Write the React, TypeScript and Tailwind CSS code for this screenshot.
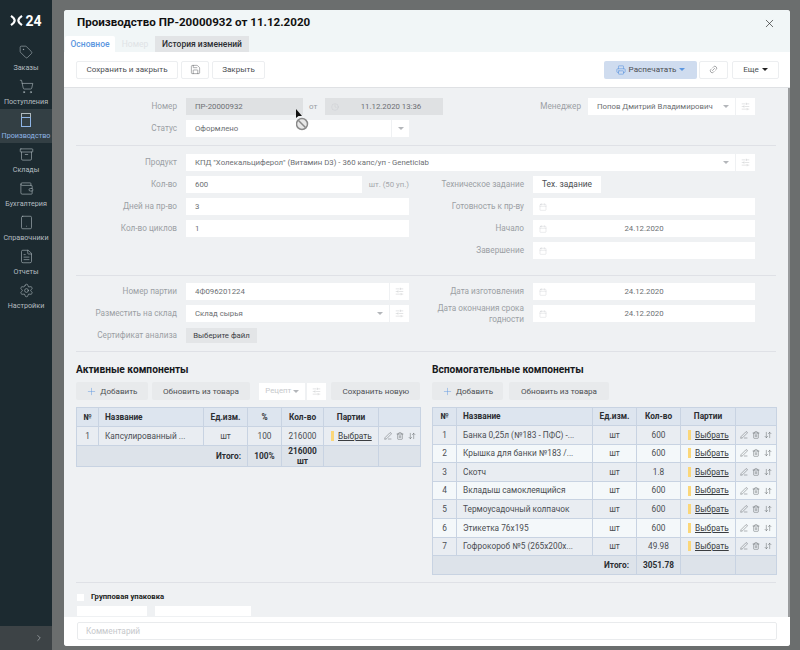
import React from "react";
import { Tag, ShoppingCart, Archive, Wallet, Tablet, FileText, Settings, ChevronRight, X, Plus, Save, Link2, Calendar, SlidersHorizontal, PenLine, Trash2, ArrowDownUp, Clock, Printer } from "lucide-react";

const font = { fontFamily: "Roboto, Inter, 'Noto Sans', sans-serif" };

function ProductionIcon() {
  return (
    <svg width="14" height="16" viewBox="0 0 14 16" fill="none" stroke="#aeb9bd" strokeWidth="1">
      <rect x="2.5" y="1.5" width="9" height="4" />
      <rect x="2.5" y="5.5" width="9" height="9" stroke="#8fb5e6" />
    </svg>
  );
}

const navItems: [string, React.ReactNode][] = [
  ["Заказы", <Tag size={14} strokeWidth={1} />],
  ["Поступления", <ShoppingCart size={15} strokeWidth={1} />],
  ["Производство", <ProductionIcon />],
  ["Склады", <Archive size={15} strokeWidth={1} />],
  ["Бухгалтерия", <Wallet size={15} strokeWidth={1} />],
  ["Справочники", <Tablet size={15} strokeWidth={1} />],
  ["Отчеты", <FileText size={15} strokeWidth={1} />],
  ["Настройки", <Settings size={15} strokeWidth={1} />],
];

function Sidebar() {
  return (
    <aside className="flex h-[650px] w-[52px] shrink-0 flex-col bg-[#1c2a30]">
      <div className="flex h-[41px] items-center justify-center gap-[2px]">
        <svg width="13" height="11" viewBox="0 0 14 12" fill="none" stroke="#ffffff" strokeWidth="2.4">
          <path d="M1 1 C4 3 5 5 5 6 C5 7 4 9 1 11" />
          <path d="M13 1 C10 3 9 5 9 6 C9 7 10 9 13 11" />
        </svg>
        <span className="text-[14px] font-bold leading-none text-white">24</span>
      </div>
      <nav className="flex flex-col">
        {navItems.map(([label, icon]) => {
          const active = label === "Производство";
          return (
            <div key={label} className={`flex h-[34px] flex-col items-center justify-center gap-[2px] ${active ? "bg-[#333f44] text-[#8fb5e6]" : "text-[#b5bdc0]"}`}>
              <span className="flex h-[18px] items-center justify-center text-[#aeb9bd]">{icon}</span>
              <span className="whitespace-nowrap text-[7.2px] leading-[10px]">{label}</span>
            </div>
          );
        })}
      </nav>
      <div className="mt-auto flex h-[24px] items-center justify-end bg-[#3d4346] pr-[8px] text-[#9aa0a3]">
        <ChevronRight size={10} />
      </div>
    </aside>
  );
}

function Btn({ children, className = "" }: { children: React.ReactNode; className?: string }) {
  return <div className={`flex h-[18px] items-center justify-center whitespace-nowrap rounded-[2px] text-[8.1px] text-[#4b4e52] ${className}`}>{children}</div>;
}

function Tune() {
  return (
    <div className="ml-[1px] flex h-[17px] w-[19px] shrink-0 items-center justify-center bg-white text-[#b3b6ba]">
      <SlidersHorizontal size={9} strokeWidth={1} />
    </div>
  );
}

function Caret({ dark = false }: { dark?: boolean }) {
  return <span className={`inline-block h-0 w-0 border-x-[3px] border-t-[3px] border-x-transparent ${dark ? "border-t-[#222]" : "border-t-[#b3b6ba]"}`} />;
}

function Label({ children, w }: { children: React.ReactNode; w: string }) {
  return <div className={`${w} shrink-0 pr-[9px] text-right text-[8.2px] leading-[11px] text-[#9b9fa4]`}>{children}</div>;
}

function Input({ value, w, select = false, grey = false }: { value: string; w: string; select?: boolean; grey?: boolean }) {
  return (
    <div className={`flex h-[17px] ${w} items-center pl-[9px] text-[7.8px] text-[#6c6f73] ${grey ? "bg-[#dfe1e3]" : "bg-white"}`}>
      <span className="flex-1 truncate">{value}</span>
      {select && (
        <span className="mr-[6px] flex items-center">
          <Caret />
        </span>
      )}
    </div>
  );
}

function DateInput({ value, w = "w-[222px]", grey = false, clock = false }: { value: string; w?: string; grey?: boolean; clock?: boolean }) {
  return (
    <div className={`flex h-[17px] ${w} items-center text-[7.8px] text-[#6c6f73] ${grey ? "bg-[#dfe1e3]" : "bg-white"}`}>
      <span className="flex w-[14px] justify-end text-[#c3c6ca]">{clock ? <Clock size={8} strokeWidth={1} /> : <Calendar size={8} strokeWidth={1} />}</span>
      <span className={`flex-1 text-center ${grey ? "" : "pr-[14px]"}`}>{value}</span>
    </div>
  );
}

function Row({ left, right }: { left: React.ReactNode; right?: React.ReactNode }) {
  return (
    <div className="flex h-[17px] items-center">
      <div className="flex w-[333px] shrink-0 items-center">{left}</div>
      {right && <div className="flex items-center">{right}</div>}
    </div>
  );
}

const L = "w-[110px]";
const R = "w-[124px]";

function Form() {
  return (
    <div className="flex flex-col">
      <div className="flex flex-col gap-[5px]">
        <div className="flex h-[17px] items-center">
          <Label w={L}>Номер</Label>
          <Input value="ПР-20000932" w="w-[117px]" grey />
          <span className="w-[22px] pl-[6px] text-[8px] text-[#9b9fa4]">от</span>
          <DateInput value="11.12.2020 13:36" w="w-[118px]" grey clock />
          <div className="w-[145px] pr-[7px] text-right text-[8.2px] text-[#9b9fa4]">Менеджер</div>
          <Input value="Попов Дмитрий Владимирович" w="w-[147px]" select />
          <Tune />
        </div>
        <Row left={<><Label w={L}>Статус</Label><Input value="Оформлено" w="w-[235px]" /><div className="ml-[1px] flex h-[17px] w-[19px] items-center justify-center bg-white"><Caret /></div></>} />
      </div>
      <div className="my-[8px] h-px bg-[#dfe1e6]" />
      <div className="flex flex-col gap-[5px]">
        <div className="flex h-[17px] items-center">
          <Label w={L}>Продукт</Label>
          <Input value='КПД "Холекальциферол" (Витамин D3) - 360 капс/уп - Geneticlab' w="w-[549px]" select />
          <Tune />
        </div>
        <Row
          left={<><Label w={L}>Кол-во</Label><Input value="600" w="w-[176px]" /><span className="ml-[7px] whitespace-nowrap text-[7.8px] text-[#a5a8ac]">шт. (50 уп.)</span></>}
          right={<><Label w={R}>Техническое задание</Label><div className="flex h-[17px] w-[68px] items-center justify-center bg-white text-[8.4px] text-[#4b4e52]">Тех. задание</div></>}
        />
        <Row
          left={<><Label w={L}>Дней на пр-во</Label><Input value="3" w="w-[223px]" /></>}
          right={<><Label w={R}>Готовность к пр-ву</Label><DateInput value="" /></>}
        />
        <Row
          left={<><Label w={L}>Кол-во циклов</Label><Input value="1" w="w-[223px]" /></>}
          right={<><Label w={R}>Начало</Label><DateInput value="24.12.2020" /></>}
        />
        <Row left={<div />} right={<><Label w={R}>Завершение</Label><DateInput value="" /></>} />
      </div>
      <div className="mb-[7px] mt-[16px] h-px bg-[#dfe1e6]" />
      <div className="flex flex-col gap-[5px]">
        <Row
          left={<><Label w={L}>Номер партии</Label><Input value="4Ф096201224" w="w-[203px]" /><Tune /></>}
          right={<><Label w={R}>Дата изготовления</Label><DateInput value="24.12.2020" /></>}
        />
        <Row
          left={<><Label w={L}>Разместить на склад</Label><Input value="Склад сырья" w="w-[203px]" select /><Tune /></>}
          right={<><Label w={R}>Дата окончания срока<br />годности</Label><DateInput value="24.12.2020" /></>}
        />
        <Row left={<><Label w={L}>Сертификат анализа</Label><div className="flex h-[15px] w-[71px] items-center justify-center bg-[#e3e5e7] text-[7.8px] text-[#3d4044]">Выберите файл</div></>} />
      </div>
      <div className="mt-[7px] h-px bg-[#dfe1e6]" />
    </div>
  );
}

const blue = "border border-[#c8d3e2]";

function Actions() {
  return (
    <div className="flex items-center justify-center gap-[4px] text-[#45484c]">
      <PenLine size={8} strokeWidth={1.2} />
      <Trash2 size={8} strokeWidth={1.2} />
      <ArrowDownUp size={8} strokeWidth={1.2} />
    </div>
  );
}

function Pick() {
  return (
    <div className="flex items-center gap-[4px] pl-[7px]">
      <span className="h-[10px] w-[3px] bg-[#fbd77a]" />
      <span className="text-[8.3px] text-[#3a3d41] underline">Выбрать</span>
    </div>
  );
}

function ActiveTable() {
  const h = `${blue} text-[8.3px] font-bold text-[#2b2e32] text-center`;
  const c = `${blue} text-[8.3px] text-[#4b4e52] text-center`;
  return (
    <table className="w-[344px] table-fixed border-collapse">
      <colgroup>
        <col className="w-[22px]" /><col className="w-[105px]" /><col className="w-[44px]" /><col className="w-[34px]" /><col className="w-[42px]" /><col className="w-[55px]" /><col className="w-[42px]" />
      </colgroup>
      <tbody>
        <tr className="h-[19px] bg-[#dde5ef]">
          <td className={h}>№</td><td className={`${h} !text-left pl-[6px]`}>Название</td><td className={h}>Ед.изм.</td><td className={h}>%</td><td className={h}>Кол-во</td><td className={h}>Партии</td><td className={h} />
        </tr>
        <tr className="h-[19px] bg-[#e9edf2]">
          <td className={c}>1</td><td className={`${c} !text-left truncate pl-[6px]`}>Капсулированный ...</td><td className={c}>шт</td><td className={c}>100</td><td className={c}>216000</td><td className={blue}><Pick /></td><td className={blue}><Actions /></td>
        </tr>
        <tr className="h-[21px] bg-[#dde3ea]">
          <td className={`${h} !text-right pr-[6px]`} colSpan={3}>Итого:</td><td className={h}>100%</td><td className={`${h} px-[4px] leading-[10px]`}>216000 шт</td><td className={blue} /><td className={blue} />
        </tr>
      </tbody>
    </table>
  );
}

const aux: [string, string][] = [
  ["Банка 0,25л (№183 - ПФС) -...", "600"],
  ["Крышка для банки №183 /...", "600"],
  ["Скотч", "1.8"],
  ["Вкладыш самоклеящийся", "600"],
  ["Термоусадочный колпачок", "600"],
  ["Этикетка 76х195", "600"],
  ["Гофрокороб №5 (265х200х...", "49.98"],
];

function AuxTable() {
  const h = `${blue} text-[8.3px] font-bold text-[#2b2e32] text-center`;
  const c = `${blue} text-[8.3px] text-[#4b4e52] text-center`;
  return (
    <table className="w-[344px] table-fixed border-collapse">
      <colgroup>
        <col className="w-[24px]" /><col className="w-[136px]" /><col className="w-[44px]" /><col className="w-[44px]" /><col className="w-[55px]" /><col className="w-[41px]" />
      </colgroup>
      <tbody>
        <tr className="h-[18px] bg-[#dde5ef]">
          <td className={h}>№</td><td className={`${h} !text-left pl-[6px]`}>Название</td><td className={h}>Ед.изм.</td><td className={h}>Кол-во</td><td className={h}>Партии</td><td className={h} />
        </tr>
        {aux.map(([n, q], i) => (
          <tr key={n} className={`h-[18.6px] ${i % 2 === 0 ? "bg-[#e9edf2]" : "bg-[#f4f8fa]"}`}>
            <td className={c}>{i + 1}</td><td className={`${c} !text-left truncate pl-[6px]`}>{n}</td><td className={c}>шт</td><td className={c}>{q}</td><td className={blue}><Pick /></td><td className={blue}><Actions /></td>
          </tr>
        ))}
        <tr className="h-[19px] bg-[#dde3ea]">
          <td className={`${h} !text-right pr-[7px]`} colSpan={3}>Итого:</td><td className={h}>3051.78</td><td className={blue} /><td className={blue} />
        </tr>
      </tbody>
    </table>
  );
}

function Components() {
  return (
    <div className="flex gap-[12px]">
      <section className="w-[344px]">
        <h2 className="mb-[6px] mt-[12px] text-[10.2px] font-bold leading-[12px] text-[#17191c]">Активные компоненты</h2>
        <div className="mb-[7px] flex h-[18px] items-center gap-[4px]">
          <Btn className="w-[73px] gap-[3px] bg-[#e8eaec]"><Plus size={11} strokeWidth={1} className="text-[#5b96e0]" />Добавить</Btn>
          <Btn className="w-[100px] bg-[#e8eaec]">Обновить из товара</Btn>
          <div className="ml-[5px] flex h-[17px] w-[47px] items-center justify-center gap-[2px] bg-white text-[7.8px] text-[#c6c8cb]">Рецепт <Caret /></div>
          <div className="-ml-[3px]"><Tune /></div>
          <Btn className="ml-[1px] w-[90px] bg-[#e8eaec]">Сохранить новую</Btn>
        </div>
        <ActiveTable />
      </section>
      <section className="w-[344px]">
        <h2 className="mb-[6px] mt-[12px] text-[10.2px] font-bold leading-[12px] text-[#17191c]">Вспомогательные компоненты</h2>
        <div className="mb-[7px] flex h-[18px] items-center gap-[6px]">
          <Btn className="w-[71px] gap-[3px] bg-[#e8eaec]"><Plus size={11} strokeWidth={1} className="text-[#5b96e0]" />Добавить</Btn>
          <Btn className="w-[100px] bg-[#e8eaec]">Обновить из товара</Btn>
        </div>
        <AuxTable />
      </section>
    </div>
  );
}

function Cursor() {
  return (
    <div className="absolute left-[232px] top-[99px]">
      <svg width="18" height="24" viewBox="0 0 18 24" fill="none">
        <path d="M0 0 L0 9 L2.5 7 L6 7 Z" fill="#111" />
        <circle cx="6" cy="15" r="5.5" fill="#e8e8e8" stroke="#8a8a8a" strokeWidth="1.5" />
        <path d="M2.5 11.5 L9.5 18.5" stroke="#8a8a8a" strokeWidth="1.5" />
      </svg>
    </div>
  );
}

function Modal() {
  return (
    <main className="relative flex h-[636px] w-[726px] flex-col overflow-hidden rounded-[3px] bg-[#eff1f3]">
      <header className="h-[42px] shrink-0 bg-[#f1f6f7]">
        <div className="flex h-[26px] items-center justify-between pl-[13px] pr-[14px]">
          <h1 className="text-[11.6px] font-bold leading-none text-[#111]">Производство ПР-20000932 от 11.12.2020</h1>
          <X size={13} strokeWidth={1.2} className="text-[#222]" />
        </div>
        <div className="flex h-[16px] pl-[1px]">
          <div className="flex w-[50px] items-center justify-center rounded-t-[2px] bg-white text-[8.5px] font-medium text-[#5b96e0]">Основное</div>
          <div className="flex w-[40px] items-center justify-center text-[8.5px] text-[#dfe3e6]">Номер</div>
          <div className="flex w-[94px] items-center justify-center bg-[#e2e4e6] text-[8.5px] font-medium text-[#2b2e32]">История изменений</div>
        </div>
      </header>
      <div className="flex h-[36px] shrink-0 items-center border-b border-[#dfe1e4] bg-white pl-[12px] pr-[11px]">
        <Btn className="w-[102px] border border-[#eceef0]">Сохранить и закрыть</Btn>
        <Btn className="ml-[3px] w-[28px] border border-[#eceef0]"><Save size={11} strokeWidth={1} /></Btn>
        <Btn className="ml-[3px] w-[53px] border border-[#eceef0]">Закрыть</Btn>
        <Btn className="ml-auto w-[93px] gap-[3px] bg-[#cfdcef]"><Printer size={10} strokeWidth={1.4} className="text-[#5b96e0]" />Распечатать <span className="inline-block h-0 w-0 border-x-[3px] border-t-[3px] border-x-transparent border-t-[#5b96e0]" /></Btn>
        <Btn className="ml-[2px] w-[29px] border border-[#eceef0]"><Link2 size={9} strokeWidth={1.2} className="-rotate-45" /></Btn>
        <Btn className="ml-[4px] w-[47px] gap-[3px] border border-[#eceef0]">Еще <Caret dark /></Btn>
      </div>
      <div className="min-h-0 flex-1 overflow-hidden border-r-2 border-[#9a9c9e] pl-[12px] pr-[12px] pt-[10px]">
        <Form />
        <Components />
        <div className="mt-[7px] h-px bg-[#dfe1e6]" />
        <div className="mt-[9px] flex h-[10px] items-center gap-[7px] pl-[1px]">
          <span className="h-[7px] w-[7px] bg-white" />
          <span className="text-[7.7px] font-bold text-[#1d1f22]">Групповая упаковка</span>
        </div>
        <div className="mt-[4px] flex gap-[8px] pl-[1px]">
          <div className="h-[10px] w-[70px] bg-white" />
          <div className="h-[10px] w-[96px] bg-white" />
        </div>
      </div>
      <footer className="flex h-[29px] shrink-0 items-start bg-white pl-[13px] pr-[13px] pt-[5px]">
        <div className="flex h-[18px] flex-1 items-center rounded-[2px] border border-[#e9ebed] pl-[8px] text-[8.3px] text-[#c6c8cb]">Комментарий</div>
      </footer>
      <Cursor />
    </main>
  );
}

export default function App() {
  return (
    <div className="flex h-[650px] w-[800px] overflow-hidden bg-[#6b6e6e]" style={font}>
      <Sidebar />
      <div className="pl-[12px] pt-[10px]">
        <Modal />
      </div>
    </div>
  );
}
